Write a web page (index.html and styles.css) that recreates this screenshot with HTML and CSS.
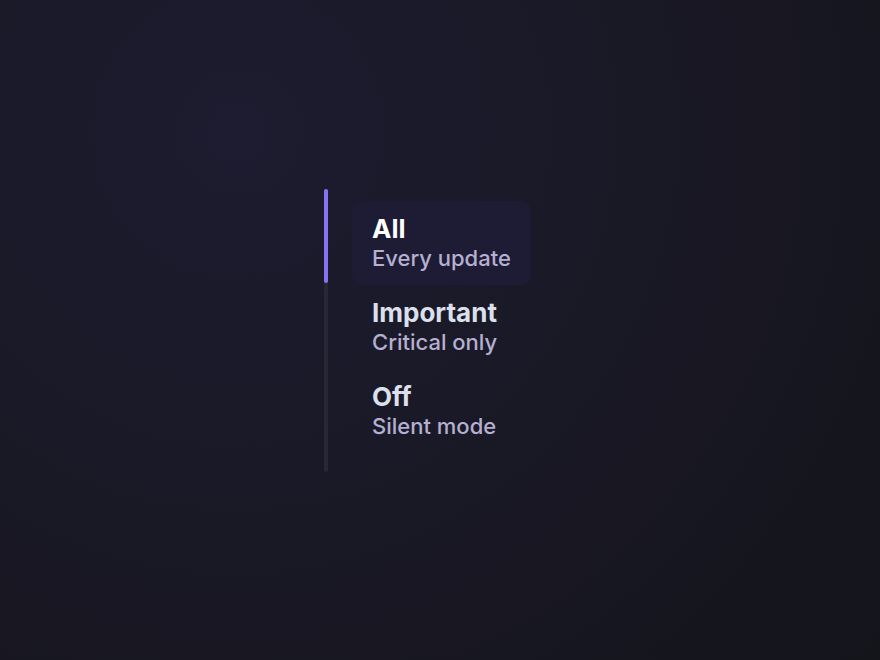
FILE: index.html
```html
<!DOCTYPE html>
<html lang="en">
<head>
<meta charset="utf-8">
<title>Notifications</title>
<link rel="stylesheet" href="styles.css">
</head>
<body>
<main class="stage">
  <div class="selector" role="radiogroup" aria-label="Notifications">
    <div class="track"><div class="indicator"></div></div>
    <ul class="options">
      <li class="option is-active" role="radio" aria-checked="true">
        <span class="title">All</span>
        <span class="sub">Every update</span>
      </li>
      <li class="option" role="radio" aria-checked="false">
        <span class="title">Important</span>
        <span class="sub">Critical only</span>
      </li>
      <li class="option" role="radio" aria-checked="false">
        <span class="title">Off</span>
        <span class="sub">Silent mode</span>
      </li>
    </ul>
  </div>
</main>
</body>
</html>
```
FILE: styles.css
```css
html, body {
  margin: 0;
  height: 100%;
}
body {
  background: radial-gradient(circle at 27% 20%, #1d1c30 0%, #1a1927 40%, #14141b 100%);
  font-family: Inter, "Noto Sans", sans-serif;
  overflow: hidden;
}
.stage {
  height: 100%;
  display: flex;
  align-items: center;
  justify-content: center;
}
.selector {
  display: flex;
  gap: 24px;
  width: 232px;
}
.track {
  width: 4px;
  border-radius: 2px;
  background: #282734;
  display: flex;
  flex-direction: column;
}
.indicator {
  height: 94px;
  border-radius: 2px;
  background: #8673f3;
}
.options {
  list-style: none;
  margin: 0;
  padding: 12px 0 19px;
  display: flex;
  flex-direction: column;
  align-items: flex-start;
}
.option {
  display: flex;
  flex-direction: column;
  padding: 13px 20px 14px;
  border-radius: 10px;
}
.option.is-active {
  background: #1e1b34;
}
.title {
  font-size: 26px;
  font-weight: 700;
  line-height: 30px;
  color: #dce0ec;
}
.is-active .title {
  color: #ffffff;
}
.sub {
  margin-top: 1px;
  font-size: 22px;
  font-weight: 500;
  line-height: 26px;
  color: #b5afd1;
}
```
